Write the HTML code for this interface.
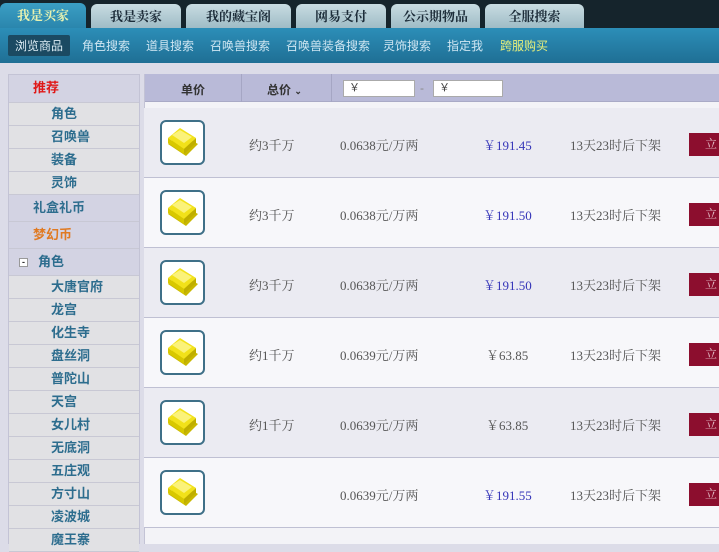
<!DOCTYPE html>
<html><head><meta charset="utf-8"><style>
*{margin:0;padding:0;box-sizing:border-box}
body{width:719px;height:537px;overflow:hidden;background:#dcdce8;font-family:"Liberation Sans","Noto Sans CJK SC",sans-serif;position:relative}
.top{position:absolute;left:0;top:0;width:719px;height:28px;background:#15242c}
.tab{position:absolute;top:4px;height:24px;border-radius:6px 6px 0 0;background:linear-gradient(#c8dce2,#9fbcc6);color:#1d2d3a;font-family:"Noto Serif CJK SC",serif;font-weight:bold;font-size:13px;text-align:center;line-height:24px}
.tab.on{background:linear-gradient(#3b9fc4,#2a86ad);color:#e8f2b0;top:3px;height:25px}
.sub{position:absolute;left:0;top:28px;width:719px;height:35px;background:linear-gradient(#2c8eb8,#1f6f95);font-size:12px;color:#cfe6f2}
.sub span{position:absolute;top:9px}
.sub .on{background:#1b4a62;padding:2px 7px;top:7px;left:8px;border-radius:2px;color:#dcecf4}
.side{position:absolute;left:8px;top:74px;width:132px;height:470px;background:#e3e3e8;border:1px solid #c3c3d5}
.si{height:23px;border-bottom:1px solid #c8c8d4;background:#e1e1e4;color:#2d6d8e;font-weight:bold;font-size:13px;line-height:22px;padding-left:42px}
.si.big{height:27px;line-height:26px;background:#d3d3e3;padding-left:24px;font-size:13px}
.main{position:absolute;left:144px;top:74px;width:575px;height:470px;background:#f3f3f7;border-left:1px solid #c3c3d5}
.hd{height:28px;background:#b9bad8;border-bottom:1px solid #a9aac6;position:relative;font-size:12px;color:#333;font-weight:bold}
.hd span{position:absolute;top:7px}
.inp{position:absolute;top:6px;height:17px;background:#fff;border:1px solid #aaa;font-size:11px;padding-left:5px;line-height:15px;color:#444;font-weight:normal}
.row{position:absolute;left:0;width:575px;height:70px;border-bottom:1px solid #bfc0d3;font-family:"Liberation Serif","Noto Serif CJK SC",serif;font-size:13px;color:#555}
.row span{position:absolute;top:27px}
.ic{position:absolute;left:16px;top:12px;width:45px;height:45px;border:2px solid #3f7088;border-radius:6px;background:#fff}
.pr{color:#3535b8}
.btn{position:absolute;left:545px;top:25px;width:32px;height:23px;background:#8c0e2e;color:#e8c8d0;font-size:12px;padding-left:16px;line-height:23px}
</style></head><body>
<div class="top">
<div class="tab on" style="left:0;width:86px">我是买家</div>
<div class="tab" style="left:91px;width:90px">我是卖家</div>
<div class="tab" style="left:186px;width:105px">我的藏宝阁</div>
<div class="tab" style="left:296px;width:90px">网易支付</div>
<div class="tab" style="left:391px;width:89px">公示期物品</div>
<div class="tab" style="left:485px;width:99px">全服搜索</div>
</div>
<div class="sub">
<span class="on">浏览商品</span>
<span style="left:82px">角色搜索</span>
<span style="left:146px">道具搜索</span>
<span style="left:210px">召唤兽搜索</span>
<span style="left:286px">召唤兽装备搜索</span>
<span style="left:383px">灵饰搜索</span>
<span style="left:447px">指定我</span>
<span style="left:500px;color:#e8f07a">跨服购买</span>
</div>
<div class="side">
<div class="si big" style="color:#e01818;height:28px">推荐</div>
<div class="si">角色</div><div class="si">召唤兽</div><div class="si">装备</div><div class="si">灵饰</div>
<div class="si big">礼盒礼币</div>
<div class="si big" style="color:#e07a22">梦幻币</div>
<div class="si big" style="padding-left:10px"><span style="display:inline-block;width:9px;height:9px;border:1px solid #999;background:#fff;font-size:9px;line-height:6px;text-align:center;color:#333;margin-right:10px;vertical-align:1px">-</span>角色</div>
<div class="si">大唐官府</div><div class="si">龙宫</div><div class="si">化生寺</div><div class="si">盘丝洞</div><div class="si">普陀山</div><div class="si">天宫</div><div class="si">女儿村</div><div class="si">无底洞</div><div class="si">五庄观</div><div class="si">方寸山</div><div class="si">凌波城</div><div class="si">魔王寨</div>
</div>
<div class="main">
<div class="hd">
<span style="left:36px">单价</span>
<div style="position:absolute;left:96px;top:0;width:1px;height:28px;background:#a5a6c4"></div>
<span style="left:122px">总价 <small style="font-size:9px">⌄</small></span>
<div style="position:absolute;left:186px;top:0;width:1px;height:28px;background:#a5a6c4"></div>
<div class="inp" style="left:198px;width:72px">￥</div>
<span style="left:275px;color:#888;font-weight:normal">-</span>
<div class="inp" style="left:288px;width:70px">￥</div>
</div>
</div>
<div id="rows" style="position:absolute;left:144px;top:108px"></div>
<script>
var d=[["约3千万","0.0638元/万两","￥191.45",1],["约3千万","0.0638元/万两","￥191.50",1],["约3千万","0.0638元/万两","￥191.50",1],["约1千万","0.0639元/万两","￥63.85",0],["约1千万","0.0639元/万两","￥63.85",0],["","0.0639元/万两","￥191.55",1]];
var ic='<div class="ic"><svg width="41" height="41" viewBox="0 0 41 41"><polygon points="6,22 18,12 36,22 24,34" fill="#c9b800"/><polygon points="6,16 18,6 34,16 22,27" fill="#f2e21a"/><polygon points="6,16 22,27 22,32 6,21" fill="#d8c800"/><polygon points="22,27 34,16 34,21 22,32" fill="#bfae00"/><polygon points="10,13 18,8 30,15 22,21" fill="#fbf27a"/></svg></div>';
var h='';d.forEach(function(r,i){h+='<div class="row" style="top:'+(i*70)+'px;background:'+(i%2?'#f7f7fa':'#ebebf2')+'">'+ic+'<span style="left:105px">'+r[0]+'</span><span style="left:196px">'+r[1]+'</span><span class="'+(r[3]?'pr':'')+'" style="left:'+(r[3]?339:342)+'px">'+r[2]+'</span><span style="left:426px">13天23时后下架</span><div class="btn">立</div></div>'});
document.getElementById('rows').innerHTML=h;
</script>
</body></html>
